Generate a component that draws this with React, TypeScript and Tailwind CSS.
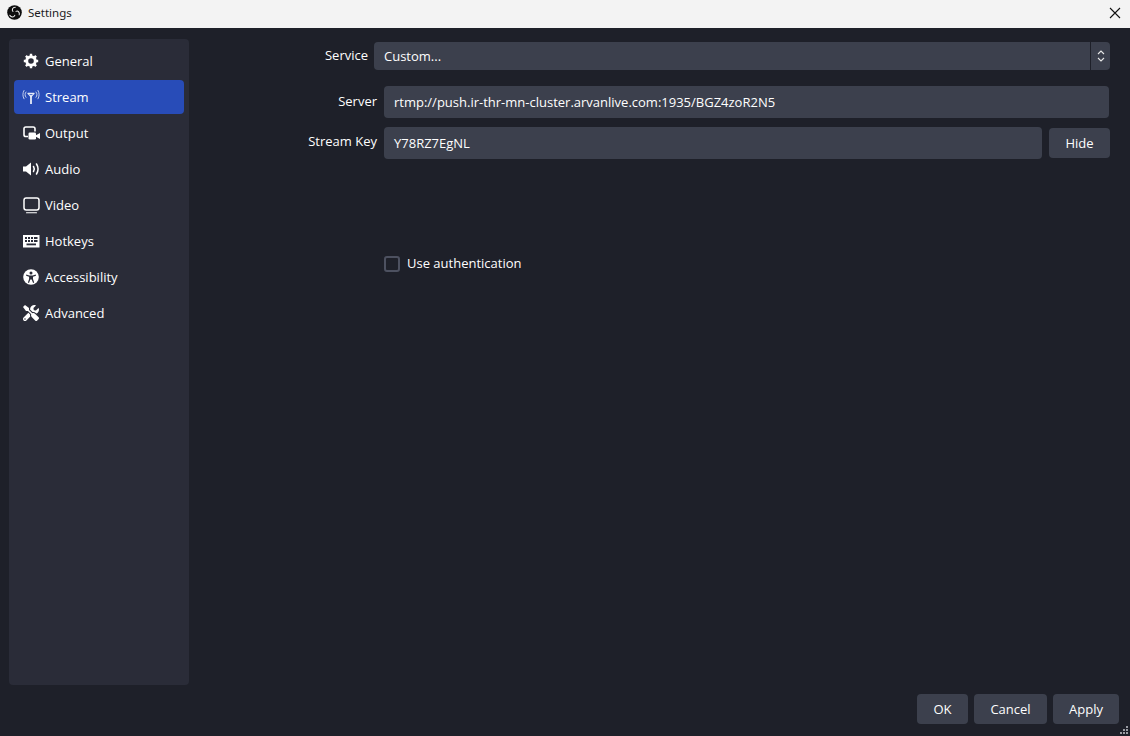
import React from 'react';
import { FaTools } from 'react-icons/fa';

const GearIcon = () => (
  <svg width="16" height="16" viewBox="0 0 16 16" fill="none" stroke="#fff">
    <circle cx="8" cy="8" r="4.300" strokeWidth="3" />
    <path
      d="M8 .8v2.400M8 12.800v2.400M.8 8h2.400M12.800 8h2.400M2.900 2.900l1.700 1.700M11.400 11.400l1.700 1.700M13.100 2.900l-1.700 1.700M4.600 11.400l-1.700 1.700"
      strokeWidth="2.400"
    />
  </svg>
);

const StreamIcon = () => (
  <svg width="18" height="16" viewBox="0 0 18 16" fill="none" stroke="#d5dcf0" strokeLinecap="round">
    <path d="M4 3c-1.300 1.700-1.300 3.600 0 5.300M2 1.500c-1.500 2.600-1.500 5.700 0 8.300M14 3c1.300 1.700 1.300 3.600 0 5.300M16 1.500c1.500 2.600 1.500 5.700 0 8.300" strokeWidth="0.900" />
    <path d="M6 4.500h6" stroke="#e6ebf7" strokeWidth="1.300" />
    <path d="M9 6v9" stroke="#e6ebf7" strokeWidth="1.800" strokeLinecap="butt" />
    <path d="M6.500 5l2.500 3 2.500-3" stroke="#e6ebf7" strokeWidth="1.100" />
  </svg>
);

const OutputIcon = () => (
  <svg width="17" height="15" viewBox="0 0 17 15" fill="none">
    <path d="M5 10.500H2.800A1.800 1.800 0 0 1 1 8.700V2.800A1.800 1.800 0 0 1 2.800 1h7.400A1.800 1.800 0 0 1 12 2.800V5.500" stroke="#fff" strokeWidth="1.600" />
    <rect x="5.500" y="6.500" width="7.500" height="7" rx="1.300" fill="#fff" />
    <path d="M12.500 9.500L17 7v6l-4.500-2.500z" fill="#fff" />
  </svg>
);

const AudioIcon = () => (
  <svg width="17" height="16" viewBox="0 0 17 16" fill="none">
    <path d="M0 5.500h3L8 1.500v13l-5-4H0z" fill="#fff" />
    <path d="M10.500 5.500c1 1.600 1 3.400 0 5" stroke="#fff" strokeWidth="1.500" strokeLinecap="round" />
    <path d="M13.500 3c2 3.200 2 6.800 0 10" stroke="#fff" strokeWidth="1.500" strokeLinecap="round" />
  </svg>
);

const VideoIcon = () => (
  <svg width="17" height="17" viewBox="0 0 17 17" fill="none">
    <rect x="1" y="1" width="15" height="12" rx="2.200" stroke="#fff" strokeWidth="1.500" />
    <path d="M3.500 15.800h10" stroke="#fff" strokeWidth="1.100" strokeLinecap="round" />
  </svg>
);

const KeyboardIcon = () => (
  <svg width="17" height="13" viewBox="0 0 17 13">
    <rect width="16.500" height="12.500" fill="#fff" />
    <g fill="#2a2c38">
      <rect x="2" y="2" width="2" height="2" />
      <rect x="5" y="2" width="2" height="2" />
      <rect x="8" y="2" width="2" height="2" />
      <rect x="11" y="2" width="3.500" height="2" />
      <rect x="2" y="5" width="2" height="2" />
      <rect x="5" y="5" width="2" height="2" />
      <rect x="8" y="5" width="2" height="2" />
      <rect x="11" y="5" width="3.500" height="2" />
      <rect x="3.500" y="8.500" width="9.500" height="1.800" />
    </g>
  </svg>
);

const AccessIcon = () => (
  <svg width="16" height="16" viewBox="0 0 16 16">
    <circle cx="8" cy="8" r="7.800" fill="#fff" />
    <circle cx="8" cy="3.900" r="1.500" fill="#2a2c38" />
    <path d="M3.300 5.600l3 .8h3.400l3-.8.300 1.100-3 1v2.200l1.200 3.600-1.100.4L8.700 10.500H7.300L6 13.900l-1.100-.4 1.200-3.600V7.700l-3-1z" fill="#2a2c38" />
  </svg>
);

const ObsLogo = () => (
  <svg className="-mt-[2px] ml-[1px]" width="15" height="15" viewBox="0 0 16 16" fill="none">
    <circle cx="8" cy="8" r="7.800" fill="#0d0d0d" />
    <g stroke="#f0f0f0" strokeWidth="1.100" strokeLinecap="round">
      <path d="M8.800 2.400C6 2.300 4.800 5 6.400 6.900" />
      <path d="M3 11C4.300 13.400 7.400 13.500 8.300 11" />
      <path d="M13 10.500C13.800 8 11.800 5.700 9.600 6.800" />
    </g>
  </svg>
);

const navItems = [
  { label: 'General', icon: <GearIcon /> },
  { label: 'Stream', icon: <StreamIcon /> },
  { label: 'Output', icon: <OutputIcon /> },
  { label: 'Audio', icon: <AudioIcon /> },
  { label: 'Video', icon: <VideoIcon /> },
  { label: 'Hotkeys', icon: <KeyboardIcon /> },
  { label: 'Accessibility', icon: <AccessIcon /> },
  { label: 'Advanced', icon: <FaTools size={16} color="#fff" /> },
];

const FooterButton = ({ label, width }: { label: string; width: string }) => (
  <div className={`h-[30px] ${width} flex items-center justify-center rounded bg-[#3c404d] text-[13px] text-[#fefefe]`}>
    {label}
  </div>
);

export default function App() {
  return (
    <div className="relative w-[1130px] h-[736px] flex flex-col overflow-hidden bg-[#1e2029] text-[13px] leading-[18px] text-[#fefefe] font-['Open_Sans',sans-serif]">
      {/* Title bar */}
      <div className="h-[28px] shrink-0 flex items-center bg-[#f3f3f3] pl-[6px] pr-[9px] pb-[2px] text-[#1a1a1a]">
        <ObsLogo />
        <span className="ml-[6px] text-[11.5px] font-['Noto_Sans',sans-serif]">Settings</span>
        <svg className="ml-auto" width="12" height="12" viewBox="0 0 12 12" stroke="#111" strokeWidth="1.100">
          <path d="M1 1l10 10M11 1L1 11" />
        </svg>
      </div>

      <div className="flex-1 flex flex-col pl-[9px] pr-[11px] pt-[11px] pb-[12px] min-h-0">
        <div className="flex-1 flex min-h-0">
          {/* Sidebar */}
          <div className="w-[180px] shrink-0 flex flex-col gap-[2px] rounded bg-[#2a2c38] px-[5px] pt-[5px] mb-[9px]">
            {navItems.map((item) => (
              <div
                key={item.label}
                className={`h-[34px] flex items-center rounded pl-[8px] ${item.label === 'Stream' ? 'bg-[#284cb8]' : ''}`}
              >
                <span className="w-[18px] flex justify-center">{item.icon}</span>
                <span className="ml-[5px]">{item.label}</span>
              </div>
            ))}
          </div>

          {/* Form */}
          <div className="flex-1 flex flex-col pt-[3px] pl-[13px] min-w-0">
            <div className="flex items-center h-[28px]">
              <div className="w-[172px] pr-[6px] text-right -mt-[2px]">Service</div>
              <div className="w-[736px] h-[28px] flex rounded bg-[#3c404d]">
                <div className="flex-1 flex items-center pl-[10px]">Custom...</div>
                <div className="w-[20px] flex items-center justify-center border-l border-[#1e2029]">
                  <svg width="8" height="14" viewBox="0 0 8 14" fill="none" stroke="#e8e8e8" strokeWidth="1.100">
                    <path d="M1 5l3-3 3 3M1 9l3 3 3-3" />
                  </svg>
                </div>
              </div>
            </div>

            <div className="mt-[16px] flex items-center h-[32px]">
              <div className="w-[182px] pr-[7px] text-right -mt-[2px]">Server</div>
              <div className="w-[725px] h-[32px] flex items-center rounded bg-[#3c404d] pl-[10px]">
                rtmp://push.ir-thr-mn-cluster.arvanlive.com:1935/BGZ4zoR2N5
              </div>
            </div>

            <div className="mt-[9px] flex items-center h-[32px]">
              <div className="w-[182px] pr-[7px] text-right -mt-[4px]">Stream Key</div>
              <div className="w-[658px] h-[32px] flex items-center rounded bg-[#3c404d] pl-[10px]">Y78RZ7EgNL</div>
              <div className="ml-[7px] w-[61px] h-[30px] flex items-center justify-center rounded bg-[#3c404d]">Hide</div>
            </div>

            <div className="mt-[97px] ml-[182px] flex items-center">
              <div className="w-[16px] h-[16px] rounded-[3px] border-2 border-[#4d5160]" />
              <span className="ml-[7px] -mt-[2px]">Use authentication</span>
            </div>
          </div>
        </div>

        {/* Footer buttons */}
        <div className="flex justify-end gap-[6px]">
          <FooterButton label="OK" width="w-[51px]" />
          <FooterButton label="Cancel" width="w-[73px]" />
          <FooterButton label="Apply" width="w-[66px]" />
        </div>
      </div>

      {/* Resize grip */}
      <svg className="absolute left-[1118px] top-[725px]" width="12" height="11" viewBox="0 0 12 11" fill="#9a9ca3">
        <rect x="8" y="1" width="2" height="2" />
        <rect x="5" y="4" width="2" height="2" />
        <rect x="8" y="4" width="2" height="2" />
        <rect x="2" y="7" width="2" height="2" />
        <rect x="5" y="7" width="2" height="2" />
        <rect x="8" y="7" width="2" height="2" />
      </svg>
    </div>
  );
}
